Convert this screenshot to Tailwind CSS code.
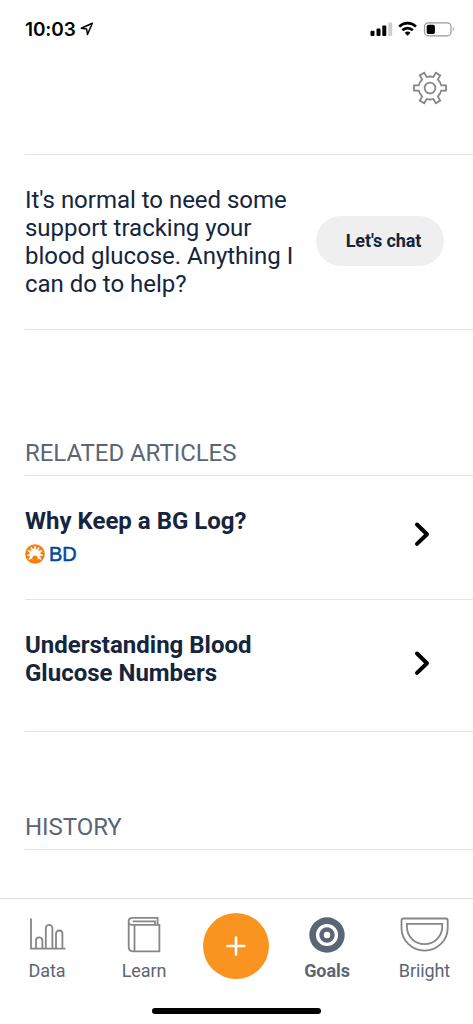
<!DOCTYPE html>
<html lang="en">
<head>
<meta charset="utf-8">
<title>Goals</title>
<script src="https://cdn.jsdelivr.net/npm/@tailwindcss/browser@4"></script>
</head>
<body class="bg-white">
<div class="relative flex h-[1024px] w-[473px] flex-col overflow-hidden bg-white font-[Roboto,sans-serif] text-[#14253d]">
  <header class="flex h-[58px] shrink-0 items-center justify-between pr-[18px] pl-[25px] text-black">
    <div class="flex items-center gap-[4px]">
      <span class="pt-[2px] font-[Inter,sans-serif] text-[19px] leading-[20px] font-semibold tracking-[-0.1px]">10:03</span>
      <svg class="h-[14px] w-[14px]" viewBox="0 0 14 14" fill="none" stroke="#000" stroke-width="1.5" stroke-linejoin="round"><path d="M12.3 1.3 1.3 6.2l5.3.8.9 5.5z"/></svg>
    </div>
    <svg class="h-[16px] w-[86px]" viewBox="0 0 86 16">
      <rect x="1.5" y="9.8" width="4" height="5.2" rx="1"/><rect x="7.5" y="7.6" width="4" height="7.4" rx="1"/><rect x="13.3" y="4.5" width="4" height="10.5" rx="1"/><rect x="19.2" y="1.5" width="4" height="13.5" rx="1" fill="#cfcfcf"/>
      <g fill="none" stroke="#000" stroke-width="2.7"><path d="M30.2 5.6a12 12 0 0 1 16.8 0"/><path d="M33.4 9.3a7.3 7.3 0 0 1 10.4 0"/></g>
      <path d="M35.7 11.8a4.3 4.3 0 0 1 5.8 0l-2.9 3z"/>
      <rect x="55.5" y="1.8" width="26.5" height="13" rx="3.8" fill="none" stroke="#999" stroke-width="1.2"/><rect x="57.7" y="3.8" width="8.2" height="9.2" rx="1.8"/><path d="M83.8 5.8q2.2 2.3 0 4.6z" fill="#999"/>
    </svg>
  </header>

  <div class="flex h-[96px] shrink-0 justify-end pt-[13px] pr-[26px]">
    <svg class="h-[34px] w-[34px]" viewBox="-17 -17 34 34" fill="none" stroke="#868686" stroke-width="1.8"><path d="M11.2-2.6H16V2.6H11.2A11.5 11.5 0 0 1 7.85 8.4L10.25 12.56 5.75 15.16 3.35 11A11.5 11.5 0 0 1-3.35 11L-5.75 15.16-10.25 12.56-7.85 8.4A11.5 11.5 0 0 1-11.2 2.6H-16V-2.6H-11.2A11.5 11.5 0 0 1-7.85-8.4L-10.25-12.56-5.75-15.16-3.35-11A11.5 11.5 0 0 1 3.35-11L5.75-15.16 10.25-12.56 7.85-8.4A11.5 11.5 0 0 1 11.2-2.6Z"/><circle r="5.4"/></svg>
  </div>

  <main class="ml-[25px] flex grow flex-col">
    <section class="flex h-[176px] shrink-0 items-center justify-between border-y border-[#e4e4e4] pr-[29px]">
      <p class="w-[280px] text-[24px] leading-[28px] tracking-[-0.02px] whitespace-nowrap">It's normal to need some<br>support tracking your<br>blood glucose. Anything I<br>can do to help?</p>
      <button class="mb-[2px] h-[50px] w-[128px] rounded-full bg-[#efefef] pl-[7px] text-[18px] leading-[22px] font-bold tracking-[-0.1px] whitespace-nowrap">Let's chat</button>
    </section>
    <h2 class="mt-[109px] h-[37px] shrink-0 border-b border-[#e4e4e4] text-[24px] leading-[28px] tracking-[-0.05px] text-[#5a6675]">RELATED ARTICLES</h2>
    <article class="flex h-[124px] shrink-0 justify-between border-b border-[#e4e4e4] pr-[43px]">
      <div class="flex flex-col pt-[31px]">
        <h3 class="text-[24px] leading-[28px] font-bold whitespace-nowrap">Why Keep a BG Log?</h3>
        <div class="mt-[9px] flex h-[20px] items-center gap-[4px]">
          <svg class="h-[20px] w-[20px]" viewBox="-10 -10 20 20"><circle r="9.8" fill="#f97d0b"/><path d="M0-8 1.1-3.9 4-6.9 3.3-2.6 7.2-3.8 4.6-.4 7.8 1.2 4.4 2.1 6.2 5.4 2.6 4.2 1.8 6H-1.8L-2.6 4.2-6.2 5.4-4.4 2.1-7.8 1.2-4.6-.4-7.2-3.8-3.3-2.6-4-6.9-1.1-3.9Z" fill="#fff" stroke="#fff" stroke-width=".6" stroke-linejoin="round"/><path d="M-1.9 9V5.8Q-3.1 5-2.7 3.6-2 1.6 0 1.6T2.7 3.6Q3.1 5 1.9 5.8V9Z" fill="#f97d0b"/></svg>
          <span class="font-['Liberation_Sans',sans-serif] text-[20px] leading-[20px] tracking-[-0.2px] text-[#004a98] [-webkit-text-stroke:0.5px_#004a98]">BD</span>
        </div>
      </div>
      <svg class="mt-[45px] h-[26px] w-[16px]" viewBox="0 0 16 26" fill="none" stroke="#000" stroke-width="4" stroke-linecap="round" stroke-linejoin="round"><path d="m3 3.5 10 9.7L3 22.9"/></svg>
    </article>
    <article class="flex h-[132px] shrink-0 justify-between border-b border-[#e4e4e4] pr-[43px]">
      <h3 class="pt-[31px] text-[24px] leading-[28px] font-bold whitespace-nowrap">Understanding Blood<br>Glucose Numbers</h3>
      <svg class="mt-[50px] h-[26px] w-[16px]" viewBox="0 0 16 26" fill="none" stroke="#000" stroke-width="4" stroke-linecap="round" stroke-linejoin="round"><path d="m3 3.5 10 9.7L3 22.9"/></svg>
    </article>
    <h2 class="mt-[81px] h-[37px] shrink-0 border-b border-[#e4e4e4] text-[24px] leading-[28px] tracking-[-0.05px] text-[#5a6675]">HISTORY</h2>
  </main>

  <nav class="flex h-[126px] shrink-0 border-t border-[#dedede] text-[18px] leading-[22px] tracking-[-0.1px] text-[#5a6675]">
    <div class="flex w-[94px] flex-col items-center gap-[6px] pt-[17px]">
      <svg class="h-[38px] w-[38px]" viewBox="0 0 38 38" fill="none" stroke="#868686" stroke-width="1.8"><path d="M3 2.5V32.7H37.5M8 32.7V24.5a3.2 3.2 0 0 1 6.4 0v8.2M17.8 32.7V12.2a3.3 3.3 0 0 1 6.6 0v20.5M28 32.7V17.7a3.2 3.2 0 0 1 6.4 0v15"/></svg>
      <span>Data</span>
    </div>
    <div class="flex w-[100px] flex-col items-center gap-[6px] pt-[17px]">
      <svg class="h-[38px] w-[38px]" viewBox="0.4 0 38 38" fill="none" stroke="#868686" stroke-width="1.8"><path d="M34.8 8.9H7.9C2.8 8.9 2.6 1.9 7.9 1.9H33V8.9M30.4 8.9V5.4H8M4.1 5.5V31q0 4.3 4.3 4.3H34.8V8M9.9 8.9V35.3"/></svg>
      <span>Learn</span>
    </div>
    <div class="flex w-[84px] justify-center pt-[14px]">
      <div class="flex h-[66px] w-[66px] items-center justify-center rounded-full bg-[#f99420]">
        <svg class="h-[20px] w-[20px]" viewBox="0 0 20 20" stroke="#fff" stroke-width="2.6" stroke-linecap="round"><path d="M10 1.6v16.8M1.6 10h16.8"/></svg>
      </div>
    </div>
    <div class="flex w-[98px] flex-col items-center gap-[6px] pt-[17px]">
      <svg class="h-[38px] w-[38px]" viewBox="-19 -19 38 38"><circle r="17.7" fill="#5a6675"/><circle r="9.4" fill="none" stroke="#fff" stroke-width="3.4"/><circle r="3.2" fill="#fff"/></svg>
      <span class="font-bold">Goals</span>
    </div>
    <div class="flex w-[97px] flex-col items-center gap-[6px] pt-[17px]">
      <svg class="h-[38px] w-[50px]" viewBox="0.6 0 50 38" fill="none" stroke="#868686" stroke-width="1.8"><path d="M4 2.5H46.5Q48.3 2.5 48.3 4.3V12A23.1 22.6 0 0 1 2.1 12V4.3Q2.1 2.5 4 2.5Z"/><path d="M7.5 7.9H42.8V10.8A17.65 17.3 0 0 1 7.5 10.8Z"/></svg>
      <span>Briight</span>
    </div>
  </nav>
  <div class="absolute bottom-[10px] left-[152px] h-[6px] w-[169px] rounded-full bg-black"></div>
</div>
</body>
</html>
